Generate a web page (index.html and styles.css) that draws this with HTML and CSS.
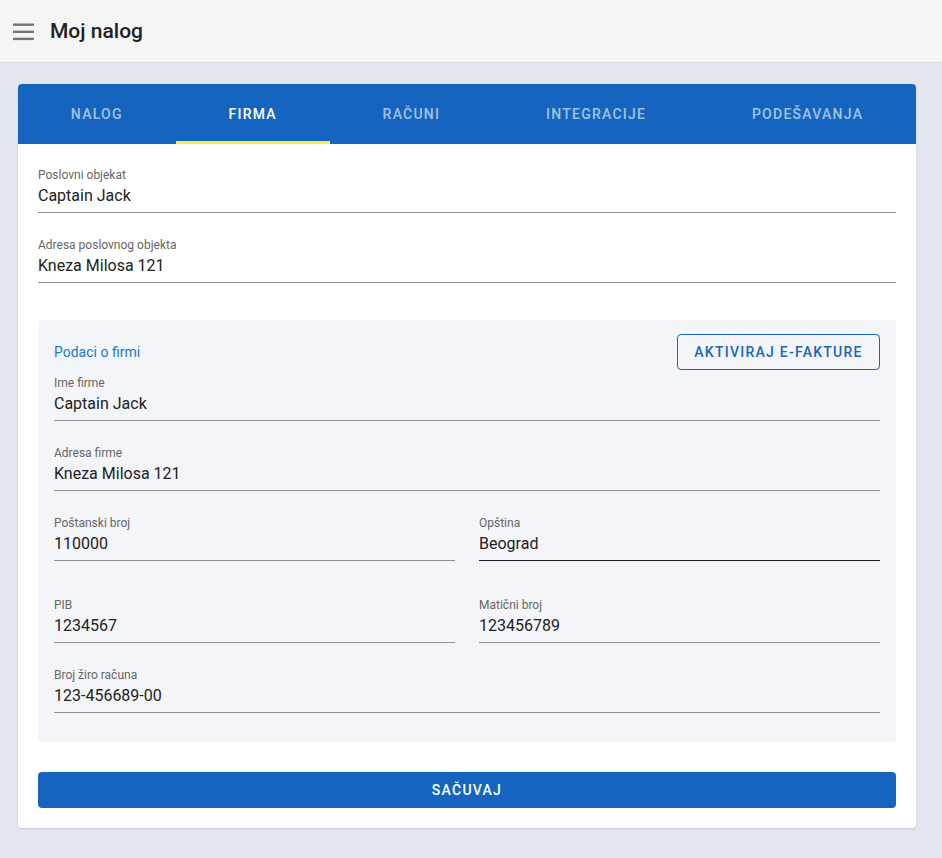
FILE: index.html
```html
<!DOCTYPE html>
<html lang="sr">
<head>
<meta charset="utf-8">
<title>Moj nalog</title>
<link rel="stylesheet" href="styles.css">
</head>
<body>
<header class="topbar">
  <button class="menu-btn" aria-label="Meni">
    <svg width="21" height="18" viewBox="0 0 21 18"><rect x="0" y="0.5" width="21" height="2.4" fill="#757575"/><rect x="0" y="7.6" width="21" height="2.4" fill="#757575"/><rect x="0" y="14.7" width="21" height="2.4" fill="#757575"/></svg>
  </button>
  <h1 class="title">Moj nalog</h1>
</header>
<main class="main">
  <section class="card">
    <nav class="tabs">
      <a class="tab">NALOG</a>
      <a class="tab active">FIRMA</a>
      <a class="tab">RAČUNI</a>
      <a class="tab">INTEGRACIJE</a>
      <a class="tab">PODEŠAVANJA</a>
    </nav>
    <div class="content">
      <label class="field">
        <span class="label">Poslovni objekat</span>
        <input class="input" value="Captain Jack">
      </label>
      <label class="field">
        <span class="label">Adresa poslovnog objekta</span>
        <input class="input" value="Kneza Milosa 121">
      </label>
      <div class="panel">
        <div class="panel-head">
          <span class="panel-title">Podaci o firmi</span>
          <button class="btn-outline">AKTIVIRAJ E-FAKTURE</button>
        </div>
        <label class="field field-first">
          <span class="label">Ime firme</span>
          <input class="input" value="Captain Jack">
        </label>
        <label class="field">
          <span class="label">Adresa firme</span>
          <input class="input" value="Kneza Milosa 121">
        </label>
        <div class="row">
          <label class="field">
            <span class="label">Poštanski broj</span>
            <input class="input" value="110000">
          </label>
          <label class="field hover">
            <span class="label">Opština</span>
            <input class="input" value="Beograd">
          </label>
        </div>
        <div class="row row-spaced">
          <label class="field">
            <span class="label">PIB</span>
            <input class="input" value="1234567">
          </label>
          <label class="field">
            <span class="label">Matični broj</span>
            <input class="input" value="123456789">
          </label>
        </div>
        <label class="field">
          <span class="label">Broj žiro računa</span>
          <input class="input" value="123-456689-00">
        </label>
      </div>
      <button class="btn-primary">SAČUVAJ</button>
    </div>
  </section>
</main>
</body>
</html>
```
FILE: styles.css
```css
* { box-sizing: border-box; }
html, body { margin: 0; padding: 0; }
body {
  font-family: Roboto, "Noto Sans", "Liberation Sans", sans-serif;
  background: #e3e6ee;
  color: #212121;
  min-height: 858px;
}
.topbar {
  height: 63px;
  background: #f5f5f5;
  border-bottom: 1px solid #d9dce4;
  display: flex;
  align-items: center;
  padding-left: 13px;
}
.menu-btn {
  border: 0;
  background: none;
  padding: 0;
  margin: 0;
  width: 21px;
  height: 18px;
  display: block;
  margin-top: 1px;
}
.menu-btn svg { display: block; }
.title {
  margin: 0 0 0 16px;
  font-size: 21px;
  font-weight: 500;
  color: #212121;
  letter-spacing: 0;
}
.main {
  padding: 21px 26px 30px 18px;
}
.card {
  background: #fff;
  border-radius: 4px;
  box-shadow: 0 1px 2px rgba(0,0,0,0.12);
  overflow: hidden;
}
.tabs {
  display: flex;
  height: 60px;
  background: #1565c0;
}
.tab {
  flex: 1 1 auto;
  display: flex;
  align-items: center;
  justify-content: center;
  font-size: 14px;
  font-weight: 500;
  letter-spacing: 1.25px;
  color: rgba(255,255,255,0.62);
  border-bottom: 3px solid transparent;
  padding-top: 3px;
}
.tab.active {
  color: #fff;
  border-bottom-color: #ffeb3b;
}
.content {
  padding: 22px 20px 20px;
  display: flex;
  flex-direction: column;
}
.field {
  display: flex;
  flex-direction: column;
  border-bottom: 1px solid #8f8f8f;
  padding-bottom: 4px;
  margin-top: 23px;
}
.content > .field:first-child { margin-top: 0; }
.field.hover { border-bottom-color: #1f1f1f; }
.label {
  font-size: 12px;
  line-height: 16px;
  padding-top: 1px;
  color: #666;
}
.input {
  border: 0;
  outline: 0;
  background: transparent;
  padding: 0;
  margin: 1px 0 0;
  font: inherit;
  font-size: 16px;
  line-height: 24px;
  height: 24px;
  color: #212121;
  width: 100%;
}
.panel {
  margin-top: 37px;
  background: #f4f5f9;
  border-radius: 4px;
  padding: 14px 16px 29px;
  display: flex;
  flex-direction: column;
}
.panel-head {
  display: flex;
  justify-content: space-between;
  align-items: center;
  height: 36px;
}
.panel-title {
  font-size: 14px;
  color: #1976d2;
}
.btn-outline {
  height: 36px;
  width: 203px;
  border: 1px solid #1565c0;
  border-radius: 4px;
  background: transparent;
  color: #1565c0;
  font-family: inherit;
  font-size: 14px;
  font-weight: 500;
  letter-spacing: 1.25px;
  padding: 0;
}
.panel .field-first { margin-top: 4px; }
.row {
  display: grid;
  grid-template-columns: 1fr 1fr;
  column-gap: 24px;
}
.row-spaced { margin-top: 12px; }
.btn-primary {
  margin-top: 30px;
  height: 36px;
  border: 0;
  border-radius: 4px;
  background: #1565c0;
  color: #fff;
  font-family: inherit;
  font-size: 14px;
  font-weight: 500;
  letter-spacing: 1.25px;
}
```
